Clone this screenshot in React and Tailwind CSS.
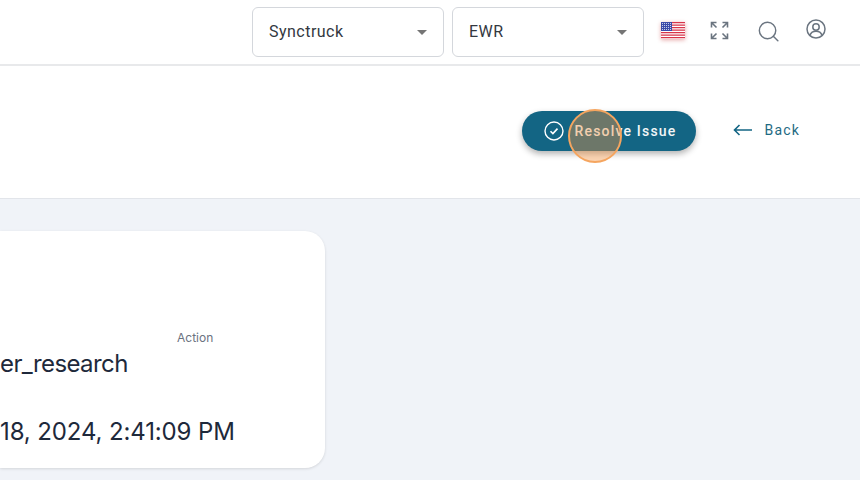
import React from 'react';

function Flag() {
  const stripes = [0, 2, 4, 6, 8, 10, 12];
  return (
    <svg width="24" height="17" viewBox="0 0 24 17" className="drop-shadow-[0_1px_2px_rgba(200,60,60,0.45)]">
      <rect width="24" height="17" fill="#fff" />
      {stripes.map((y) => (
        <rect key={y} x="0" y={y * 1.25} width="24" height="1.25" fill="#d8344a" />
      ))}
      <rect width="11" height="9" fill="#3d4aa8" />
      {[1.5, 3.5, 5.5, 7.5].map((y) =>
        [1.5, 3.5, 5.5, 7.5, 9.5].map((x) => (
          <circle key={`${x}-${y}`} cx={x} cy={y} r="0.55" fill="#dfe3f5" />
        ))
      )}
    </svg>
  );
}

function Select({ label }) {
  return (
    <div className="w-[192px] h-[50px] border border-[#d4d7dc] rounded-md bg-white flex items-center justify-between pl-4 pr-4 text-base tracking-[0.03em] text-[#33383f]">
      <span>{label}</span>
      <span className="w-0 h-0 border-x-[5px] border-x-transparent border-t-[5px] border-t-[#757575]" />
    </div>
  );
}

function Expand() {
  return (
    <svg width="20" height="20" viewBox="0 0 20 20" fill="none" stroke="#6b7580" strokeWidth="1.6">
      <path d="M1.5 6.5V1.5H6.5M1.5 1.5L6.5 6.5" />
      <path d="M12.5 1.5h5V6.5M17.5 1.5L12.5 6.5" />
      <path d="M1.5 12.5v5H6.5M1.5 17.5L6.5 12.5" />
      <path d="M12.5 17.5h5V12.5M17.5 17.5L12.5 12.5" />
    </svg>
  );
}

function Search() {
  return (
    <svg width="21" height="21" viewBox="0 0 22 22" fill="none" stroke="#6b7580" strokeWidth="1.5" strokeLinecap="round">
      <circle cx="10" cy="10" r="8.6" />
      <path d="M16 16l4.8 4.8" />
    </svg>
  );
}

function User() {
  return (
    <svg width="20" height="20" viewBox="0 0 20 20" fill="none" stroke="#6b7580" strokeWidth="1.5">
      <circle cx="10" cy="10" r="9" />
      <circle cx="10" cy="8" r="3.2" />
      <path d="M4 16.2c1-2.8 3.2-3.9 6-3.9s5 1.1 6 3.9" />
    </svg>
  );
}

export default function App() {
  return (
    <div className="w-[860px] h-[480px] overflow-hidden bg-[#f0f3f8] font-['Roboto',sans-serif]">
      <header className="h-[66px] bg-white border-b-2 border-[#e8e9eb] flex items-start justify-end pt-[7px]">
        <div className="flex gap-2">
          <Select label="Synctruck" />
          <Select label="EWR" />
        </div>
        <div className="flex items-center ml-4 mt-[12px] mr-[34px]">
          <span className="ml-px"><Flag /></span>
          <span className="ml-[25px]"><Expand /></span>
          <span className="ml-[28px] mt-[2px]"><Search /></span>
          <span className="ml-[27px] -mt-[4px]"><User /></span>
        </div>
      </header>

      <div className="h-[133px] bg-white border-b border-[#e2e5ea] flex items-start justify-end pt-[45px] pr-[60px]">
        <div className="relative">
          <button className="w-[174px] h-10 rounded-[20px] bg-[#136584] shadow-[0_3px_6px_rgba(0,0,0,0.3)] flex items-center pl-[22px] gap-[10px] text-[#f1f5f7] text-sm font-medium tracking-[0.085em]">
            <svg width="20" height="20" viewBox="0 0 20 20" fill="none" stroke="#fff" strokeWidth="1.4">
              <circle cx="10" cy="10" r="9" />
              <path d="M6.5 10.2l2.4 2.4 4.6-5" strokeWidth="1.6" />
            </svg>
            Resolve Issue
          </button>
          <span className="absolute left-[46px] -top-[2px] w-[54px] h-[54px] rounded-full border-2 border-[#f5a55f] bg-[#f59342]/40" />
        </div>
        <div className="ml-[37px] h-10 flex items-center gap-3 text-sm text-[#1f6a83] tracking-[0.085em] -mt-[1px]">
          <svg width="19" height="12" viewBox="0 0 19 12" fill="none" stroke="#136584" strokeWidth="1.6">
            <path d="M19 6H1.5M6.5 1L1.5 6l5 5" />
          </svg>
          Back
        </div>
      </div>

      <div className="pt-8">
        <div className="w-[325px] h-[237px] bg-white rounded-r-[20px] shadow-[0_1px_3px_rgba(0,0,0,0.12)] overflow-hidden font-['Inter',sans-serif] pt-[99px] whitespace-nowrap">
          <div className="flex">
            <div className="w-[177px] shrink-0" />
            <p className="text-xs text-[#6b7280]">Action</p>
          </div>
          <p className="text-2xl tracking-[-0.025em] text-[#1e293b] mt-[2px]">er_research</p>
          <p className="text-2xl tracking-[-0.005em] text-[#1e293b] mt-[36px]">18, 2024, 2:41:09 PM</p>
        </div>
      </div>
    </div>
  );
}
